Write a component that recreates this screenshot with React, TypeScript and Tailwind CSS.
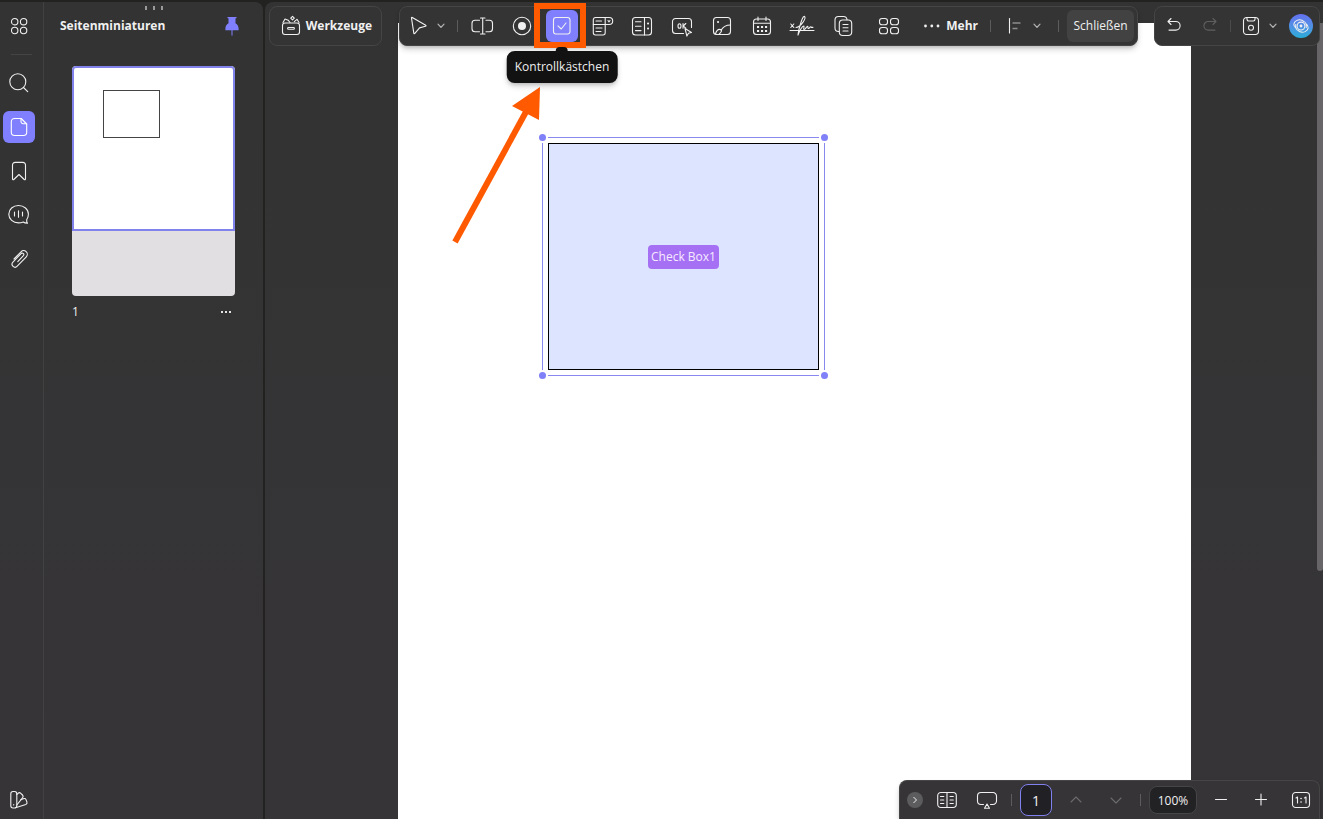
import type { ReactNode } from "react";

function Icon({ children, size = 24, className = "" }: { children: ReactNode; size?: number; className?: string }) {
  return (
    <svg
      width={size}
      height={size}
      viewBox={`0 0 ${size} ${size}`}
      fill="none"
      stroke="currentColor"
      strokeWidth="1.1"
      strokeLinecap="round"
      strokeLinejoin="round"
      aria-hidden="true"
      className={`shrink-0 ${className}`}
    >
      {children}
    </svg>
  );
}

function ToolButton({ label, children, className = "" }: { label: string; children: ReactNode; className?: string }) {
  return (
    <button type="button" aria-label={label} className={`flex size-8 shrink-0 items-center justify-center rounded-md ${className}`}>
      {children}
    </button>
  );
}

function ChevronButton({ label }: { label: string }) {
  return (
    <button type="button" aria-label={label} className="flex h-8 w-3 shrink-0 items-center justify-center text-[#b4b4b4]">
      <svg width="8" height="6" viewBox="0 0 8 6" fill="none" stroke="currentColor" strokeWidth="1.2" strokeLinecap="round" aria-hidden="true">
        <path d="M1 1.2 4 4.4 7 1.2" />
      </svg>
    </button>
  );
}

function Divider({ className = "" }: { className?: string }) {
  return <span className={`h-3 w-px shrink-0 bg-[#5c5c5c] ${className}`} />;
}

function FourDots() {
  return (
    <Icon>
      <circle cx="7.7" cy="7.7" r="3.2" />
      <circle cx="16.6" cy="7.7" r="3.2" />
      <circle cx="7.7" cy="16.5" r="3.2" />
      <circle cx="16.6" cy="16.5" r="3.2" />
    </Icon>
  );
}

function Rail() {
  return (
    <nav aria-label="Seitenleiste" className="flex w-11 shrink-0 flex-col border-r border-[#414142] px-[3px] pt-2">
      <ToolButton label="Menü">
        <FourDots />
      </ToolButton>
      <span className="mx-2 mt-3 h-px bg-[#444445]" />
      <div className="mt-3 flex flex-col gap-3">
        <ToolButton label="Suchen">
          <Icon>
            <circle cx="10.8" cy="10.8" r="8" />
            <path d="m16.5 16.5 4.2 4.2" />
          </Icon>
        </ToolButton>
        <ToolButton label="Seitenminiaturen" className="bg-[#8080ff] text-white">
          <Icon>
            <path d="M14.2 3.5H7.5a3.2 3.2 0 0 0-3.200 3.200v10.600a3.200 3.200 0 0 0 3.200 3.200h9a3.200 3.200 0 0 0 3.200-3.200V9z" />
            <path d="M14 3.600v3a2.200 2.200 0 0 0 2.200 2.200h3.300" />
          </Icon>
        </ToolButton>
        <ToolButton label="Lesezeichen">
          <Icon>
            <path d="M5.500 20V6a2.600 2.600 0 0 1 2.600-2.600h7.800A2.600 2.600 0 0 1 18.500 6v14c0 .8-.8 1-1.300.5L12 15.500l-5.200 5c-.5.500-1.300.3-1.300-.5z" />
          </Icon>
        </ToolButton>
        <ToolButton label="Kommentare">
          <Icon>
            <path d="M11.500 2.500c-5.400 0-9.700 3.700-9.700 8.700s4.300 8.700 9.700 8.700c2 0 3.300-.3 4.700-.9 1 .8 2.300 1.200 4.300 1.300-.8-1-1-2-.8-3.500 1-1.500 1.700-3.300 1.700-5.600 0-5-4.500-8.700-9.900-8.700z" />
            <path d="M7.500 9v4M11.500 7.800v6.400M15.500 9v4" />
          </Icon>
        </ToolButton>
        <ToolButton label="Anlagen">
          <Icon>
            <path d="m7 12 7-7.200a3.600 3.600 0 0 1 5.300 5L10.200 19.200a2.900 2.900 0 0 1-4.300-4l8.200-8.600a1.500 1.500 0 0 1 2.300 2l-5.600 6" />
          </Icon>
        </ToolButton>
      </div>
      <ToolButton label="Design" className="mt-auto mb-[3px]">
        <Icon>
          <rect x="3.800" y="3.500" width="6" height="16.500" rx="2.200" />
          <path d="m9.800 6.500 1.200-1.200a2 2 0 0 1 2.800 0l1.700 1.700a2 2 0 0 1 0 2.800L9.800 17" />
          <path d="m13.700 11.800 3.300-1.200a1.500 1.500 0 0 1 1.900.8l1 2.600a2 2 0 0 1-1.100 2.500L8.500 19.800M6.700 16.500v.4" />
        </Icon>
      </ToolButton>
    </nav>
  );
}

function ThumbnailPanel() {
  return (
    <aside className="relative flex w-[219px] shrink-0 flex-col">
      <div className="absolute top-1 left-[101px] flex gap-1.5">
        <i className="h-1 w-0.5 bg-[#9a9a9a]" />
        <i className="h-1 w-0.5 bg-[#9a9a9a]" />
        <i className="h-1 w-0.5 bg-[#9a9a9a]" />
      </div>
      <header className="flex h-12 items-center justify-between pr-6 pl-4">
        <h2 className="text-xs font-bold">Seitenminiaturen</h2>
        <button type="button" aria-label="Anheften" className="text-[#8080ff]">
          <svg width="14" height="20" viewBox="0 0 14 20" fill="currentColor" aria-hidden="true">
            <path d="M2.500 1h9v1.200h-1v5c2 1 3.100 2.900 3.100 5.500v1.600H.4v-1.600c0-2.600 1.100-4.500 3.100-5.500v-5h-1zM6.500 14.300h1V19.500h-1z" />
          </svg>
        </button>
      </header>
      <figure className="mt-4 mr-7 ml-7">
        <div className="overflow-hidden rounded bg-[#e2dfe2]">
          <div className="h-[165px] rounded-t border-2 border-[#8282ec] bg-white pt-[22px] pl-[29px]">
            <div className="h-12 w-[57px] border border-[#444444]" />
          </div>
          <div className="h-[65px]" />
        </div>
        <figcaption className="mt-2 flex items-center justify-between pr-1 text-xs leading-4">
          <span>1</span>
          <button type="button" aria-label="Seitenoptionen" className="flex h-4 items-center gap-0.5">
            <i className="size-0.5 bg-[#e4e4e4]" />
            <i className="size-0.5 bg-[#e4e4e4]" />
            <i className="size-0.5 bg-[#e4e4e4]" />
          </button>
        </figcaption>
      </figure>
    </aside>
  );
}

const bar = "flex h-10 shrink-0 items-center rounded-lg border border-[#454545] bg-[#343435]";

function FormToolbar() {
  return (
    <div role="toolbar" aria-label="Formular" className={`${bar} ml-[17px] px-[3px] shadow-md shadow-black/20`}>
      <ToolButton label="Auswählen">
        <Icon>
          <path d="M4.500 4.200c-.2-.6.300-1 .8-.7l13.400 7.800c.5.300.4.900-.2 1l-6 1.600-4.600 5.500c-.4.500-1 .3-1.100-.3z" />
        </Icon>
      </ToolButton>
      <ChevronButton label="Auswahloptionen" />
      <Divider className="ml-2.5" />
      <div className="ml-2 flex gap-2">
        <ToolButton label="Textfeld">
          <Icon>
            <path d="M9.500 6.200H5a3 3 0 0 0-3 3v5.600a3 3 0 0 0 3 3h4.500M16 6.200h3.500a3 3 0 0 1 3 3v5.600a3 3 0 0 1-3 3H16" />
            <path d="M12.700 4v16M10.500 4h4.500M10.500 20h4.500" />
          </Icon>
        </ToolButton>
        <ToolButton label="Optionsfeld">
          <Icon>
            <circle cx="12" cy="12" r="8.700" />
            <circle cx="12" cy="12" r="4" fill="currentColor" stroke="none" />
          </Icon>
        </ToolButton>
        <div className="relative">
          <ToolButton label="Kontrollkästchen" className="bg-[#8080ff]">
            <Icon>
              <rect x="3.500" y="3.500" width="16.500" height="16.500" rx="2.500" />
              <path d="m8 11.800 3.200 3.200 4.800-6" />
            </Icon>
          </ToolButton>
          <span className="pointer-events-none absolute -top-[7px] -right-2 -bottom-1.5 -left-3 z-10 border-6 border-[#ff5a00]" />
          <div role="tooltip" className="absolute top-[41px] left-1/2 z-10 flex h-8 -translate-x-1/2 items-center rounded-lg bg-[#121212] px-2 text-xs leading-4 whitespace-nowrap text-[#eeeeee] shadow-md shadow-black/20">
            <span className="absolute -top-1 left-1/2 h-1 w-3 -translate-x-1/2 rounded-t-full bg-[#121212]" />
            Kontrollkästchen
          </div>
        </div>
        <ToolButton label="Dropdown">
          <Icon>
            <path d="M15 3.500H5.500a2.200 2.200 0 0 0-2.200 2.200v13.100A2.200 2.200 0 0 0 5.500 21H13a2.200 2.200 0 0 0 2.200-2.200V10.500" />
            <path d="M15.200 3.500h4a3.500 3.500 0 0 1 0 7H3.300M15.200 3.500v7M6 7h5.500M6 14h6M6 17.500h5" />
            <path d="m18 6.500 1 1.300 1-1.300" />
          </Icon>
        </ToolButton>
        <ToolButton label="Listenfeld">
          <Icon>
            <rect x="2.500" y="3.500" width="19" height="17.500" rx="3" />
            <path d="M14.500 3.500V21M5.500 7.800h5.500M5.500 12.200h5.500M5.500 16.600h5.500" />
            <path d="M18 9.500h.1M18 14.500h.1" strokeWidth="2" />
          </Icon>
        </ToolButton>
        <ToolButton label="Schaltfläche">
          <Icon>
            <path d="M13.500 19.500h-8a3 3 0 0 1-3-3v-9a3 3 0 0 1 3-3h13a3 3 0 0 1 3 3v6" />
            <ellipse cx="9.500" cy="12" rx="1.500" ry="2.300" />
            <path d="M13 9.500v4.800M15.800 9.500 13.200 12l2.600 2.200" />
            <path d="m15 14.500 6.500 4-3 .7-1.600 2.900z" />
          </Icon>
        </ToolButton>
        <ToolButton label="Bild">
          <Icon>
            <rect x="3.500" y="3.500" width="17" height="17" rx="3" />
            <path d="M5.500 20c1-3.500 3-5 5-4.500 1.200.3 1.200 1.500.5 2.500-.7 1-1.500 1.500-2 2.500M11 16.500c2-4 5-5.500 9.500-5.500" />
            <path d="M8 8h.1" strokeWidth="2" />
          </Icon>
        </ToolButton>
        <ToolButton label="Datum">
          <Icon>
            <rect x="3.500" y="5" width="17" height="15.500" rx="3" />
            <path d="M3.500 9.200h17M8 3v3.500M16 3v3.500" />
            <path d="M8 13h.1M12 13h.1M16 13h.1M8 17h.1M12 17h.1M16 17h.1" strokeWidth="2" strokeLinecap="square" />
          </Icon>
        </ToolButton>
        <ToolButton label="Signatur">
          <Icon size={26}>
            <path d="M1 17.500h24M1.800 11l3 3.500M4.800 11l-3 3.500" />
            <path d="M7 14.500C12 14 17.500 5 15.500 3.500c-2-1.300-6 13-6.500 18.500 1.500-4 4.500-9.500 5.800-9 1 .6-1 3.500.4 3.500 1.500 0 2.300-3.300 3.300-3.300s-.3 2.500 1 2.300c1.200-.2 1.600-2.200 2.300-1.700.6.500.8 1 2.200.4" />
          </Icon>
        </ToolButton>
      </div>
      <ToolButton label="Felder duplizieren" className="ml-2.5">
        <Icon>
          <path d="M7 17.500H6.500a3.500 3.500 0 0 1-3.500-3.500V6a3.500 3.500 0 0 1 3.500-3.500h5A3.500 3.500 0 0 1 15 5.800" />
          <rect x="7.300" y="6" width="12.400" height="15.500" rx="3.500" />
          <path d="M11 10.500h5M11 13.700h5M11 17h5" />
        </Icon>
      </ToolButton>
      <ToolButton label="Formularfelder erkennen" className="ml-[13px]">
        <Icon>
          <rect x="2.500" y="4.500" width="8" height="6.300" rx="2.600" />
          <rect x="13.500" y="4.500" width="8" height="6.300" rx="2.600" />
          <rect x="2.500" y="13.500" width="8" height="6.300" rx="2.600" />
          <rect x="13.500" y="13.500" width="8" height="6.300" rx="2.600" />
        </Icon>
      </ToolButton>
      <button type="button" className="ml-[19px] flex h-8 w-[54px] items-center justify-between text-xs font-bold">
        <svg width="16" height="4" viewBox="0 0 16 4" fill="currentColor" aria-hidden="true">
          <circle cx="1.500" cy="2" r="1.400" />
          <circle cx="7.800" cy="2" r="1.400" />
          <circle cx="14" cy="2" r="1.400" />
        </svg>
        Mehr
      </button>
      <Divider className="ml-3" />
      <ToolButton label="Ausrichten" className="ml-2">
        <Icon>
          <path d="M6.500 4.500v14.500" />
          <path d="M9.500 9h8M9.500 14.500h5" stroke="#8c8c8c" strokeWidth="1.600" strokeLinecap="butt" />
        </Icon>
      </ToolButton>
      <ChevronButton label="Ausrichtungsoptionen" />
      <Divider className="ml-[15px]" />
      <button type="button" className="ml-2 h-8 w-[67px] rounded-md bg-[#424242] text-xs">
        Schließen
      </button>
    </div>
  );
}

function TopBar() {
  return (
    <div className="absolute inset-x-0 top-1 z-10 flex pr-[3px] pl-1">
      <button type="button" className={`${bar} w-[113px] justify-between px-[9px] text-xs font-bold`}>
        <Icon>
          <rect x="3.500" y="9" width="17" height="11.500" rx="2.500" />
          <path d="M9.500 13.500h5a.9.900 0 0 1 0 1.800h-5a.9.900 0 0 1 0-1.800z" />
          <path d="m4 8.500 2-3.500 3.200 1.200 1.800 2.300M20 8.500 18 5.300 15.300 7.700M13.500 2.300l1.800 1.800-1.800 1.800-1.800-1.800z" />
        </Icon>
        Werkzeuge
      </button>
      <FormToolbar />
      <div className={`${bar} ml-auto pr-1.5 pl-[3px]`}>
        <ToolButton label="Rückgängig">
          <Icon>
            <path d="M9 4.500 6 7.500l3 3M6.200 7.500h7.600a4.300 4.300 0 0 1 0 8.600H7" />
          </Icon>
        </ToolButton>
        <ToolButton label="Wiederholen" className="ml-1 text-[#5f5f5f]">
          <Icon>
            <path d="m15 4.500 3 3-3 3M17.800 7.500h-7.600a4.300 4.300 0 0 0 0 8.600H17" />
          </Icon>
        </ToolButton>
        <Divider className="ml-1 opacity-60" />
        <ToolButton label="Speichern" className="ml-1">
          <Icon>
            <rect x="4.500" y="3.500" width="15" height="17" rx="3.200" />
            <path d="M8 3.500v1.800A1.700 1.700 0 0 0 9.700 7h4.600A1.700 1.700 0 0 0 16 5.300V3.500" />
            <circle cx="12" cy="13.700" r="2.500" />
          </Icon>
        </ToolButton>
        <ChevronButton label="Speicheroptionen" />
        <button type="button" aria-label="KI-Assistent" className="ml-2.5 flex size-6 items-center justify-center rounded-full bg-linear-to-b from-[#6470f0] to-[#25add8]">
          <svg width="18" height="18" viewBox="0 0 24 24" fill="none" stroke="currentColor" strokeWidth="1.4" aria-hidden="true">
            <circle cx="12" cy="12" r="5.200" />
            <circle cx="12" cy="12" r="1.900" fill="currentColor" stroke="none" />
            <path d="M5.500 15C1 12 1.500 7 6.500 4.500c3-1.300 7-.8 9.500 1.700M18.500 9c4.500 3 4 8-1 10.500-3 1.300-7 .8-9.500-1.700M15 5.500C18 6.500 19.500 10 19 14.500M9 18.500C6 17.500 4.500 14 5 9.500" />
          </svg>
        </button>
      </div>
    </div>
  );
}

function Handle({ className }: { className: string }) {
  return <span className={`absolute size-[7px] rounded-full bg-[#8080f8] ring-2 ring-white ${className}`} />;
}

function DocumentPage() {
  return (
    <div className="relative mt-[21px] mr-[132px] ml-[133px] grow bg-white">
      <div className="absolute top-[114px] left-36 h-[239px] w-[283px] border border-[#8888ee] p-[5px]">
        <div className="flex h-full items-center justify-center border border-black bg-[#dde4ff]">
          <span className="rounded bg-[#a670f4] px-[3px] py-1 text-xs leading-4 text-[#f6eaff]">Check Box1</span>
        </div>
        <Handle className="-top-1 -left-1" />
        <Handle className="-top-1 -right-1" />
        <Handle className="-bottom-1 -left-1" />
        <Handle className="-right-1 -bottom-1" />
      </div>
      <svg width="92" height="160" viewBox="0 0 92 160" aria-hidden="true" className="absolute top-16 left-[52px]">
        <path d="M5 155 77 23" stroke="#ff5a00" strokeWidth="6" />
        <path d="M90 0 62 19l27 14z" fill="#ff5a00" />
      </svg>
    </div>
  );
}

function StatusBar() {
  return (
    <div className="absolute right-[3px] bottom-0 z-10 flex h-[39px] items-center rounded-t-lg border border-b-0 border-[#454545] bg-[#363437] pr-0.5 pl-[7px] shadow-md shadow-black/20">
      <button type="button" aria-label="Einklappen" className="flex size-4 items-center justify-center rounded-full bg-[#5c5b5d]">
        <svg width="6" height="8" viewBox="0 0 6 8" fill="none" stroke="currentColor" aria-hidden="true">
          <path d="M1.500 1 4.500 4l-3 3" />
        </svg>
      </button>
      <ToolButton label="Seitenansicht" className="ml-2">
        <Icon>
          <rect x="2.700" y="4.500" width="18.600" height="15" rx="3.200" />
          <path d="M12 4.500v15M5.500 8.500h3.300M5.500 12h3.300M5.500 15.500h3.300M15 8.500h3.300M15 12h3.300M15 15.500h3.300" />
        </Icon>
      </ToolButton>
      <ToolButton label="Präsentation" className="ml-2">
        <Icon>
          <path d="M8.500 16.500H6A3.500 3.500 0 0 1 2.500 13V8A3.500 3.500 0 0 1 6 4.500h12A3.500 3.500 0 0 1 21.500 8v5a3.500 3.500 0 0 1-3.500 3.500h-2.500" />
          <path d="m12 16 2.500 4.300h-5z" />
        </Icon>
      </ToolButton>
      <Divider className="ml-2" />
      <input
        aria-label="Seite"
        defaultValue="1"
        className="ml-2 size-8 rounded-lg border border-[#8080f0] bg-[#212024] text-center text-sm outline-none"
      />
      <ToolButton label="Vorherige Seite" className="ml-2 text-[#6c6b6d]">
        <Icon>
          <path d="m7 14 5-5 5 5" />
        </Icon>
      </ToolButton>
      <ToolButton label="Nächste Seite" className="ml-2 text-[#6c6b6d]">
        <Icon>
          <path d="m7 10 5 5 5-5" />
        </Icon>
      </ToolButton>
      <Divider className="ml-2" />
      <input
        aria-label="Zoom"
        defaultValue="100%"
        className="ml-2 h-7 w-12 rounded-lg border border-[#454446] bg-[#222124] text-center text-xs outline-none"
      />
      <ToolButton label="Verkleinern" className="ml-2">
        <Icon>
          <path d="M6.500 11.500h11" />
        </Icon>
      </ToolButton>
      <ToolButton label="Vergrößern" className="ml-2">
        <Icon>
          <path d="M6.500 11.500h11M12 6v11" />
        </Icon>
      </ToolButton>
      <ToolButton label="Originalgröße" className="ml-2">
        <Icon>
          <rect x="3.500" y="4.500" width="17" height="15" rx="3.200" />
          <path d="m7 10 1.500-1v6M15.500 10 17 9v6" />
          <path d="M12 10.500h.1M12 14h.1" strokeWidth="1.600" />
        </Icon>
      </ToolButton>
    </div>
  );
}

export default function App() {
  return (
    <div className="flex h-screen bg-[#222221] pt-0.5 font-['Open_Sans','Noto_Sans',sans-serif] text-[#f0f0f0]">
      <div className="flex shrink-0 rounded-tr-lg bg-linear-to-b from-[#333333] to-[#363437]">
        <Rail />
        <ThumbnailPanel />
      </div>
      <main className="relative ml-0.5 flex min-w-0 grow flex-col overflow-hidden rounded-tl-lg bg-linear-to-b from-[#333333] to-[#363437]">
        <DocumentPage />
        <span className="absolute top-[21px] right-0 h-[548px] w-1.5 rounded-b-full bg-[#676568]" />
        <TopBar />
        <StatusBar />
      </main>
    </div>
  );
}
